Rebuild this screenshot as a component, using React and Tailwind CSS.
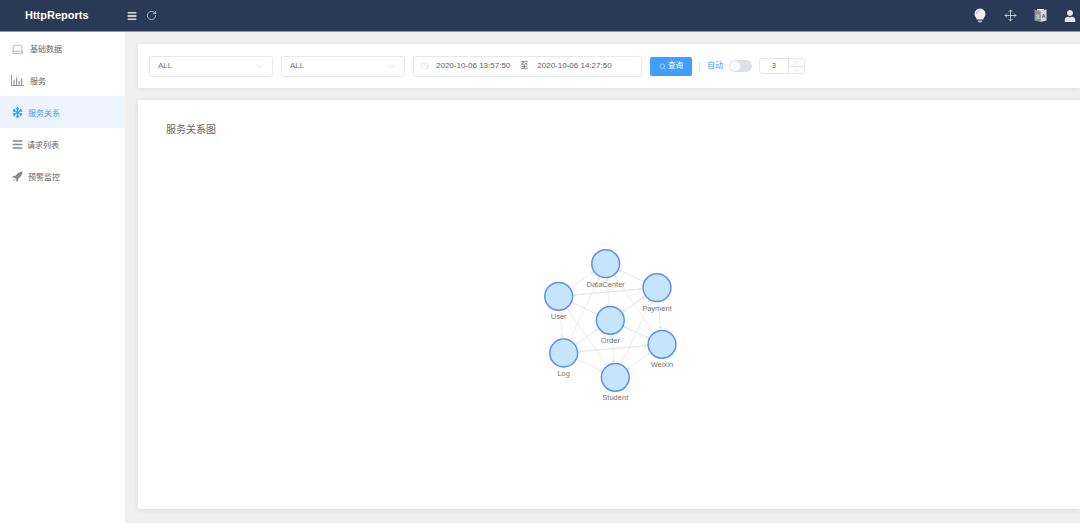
import { ChevronDown, ChevronUp, Clock, Search, RotateCw, Laptop, Move } from "lucide-react";
import { FaSnowflake, FaUser, FaBars } from "react-icons/fa";

const font = "font-['Liberation_Sans','Noto_Sans_CJK_SC',sans-serif]";

const nodes = {
  DataCenter: [605.7, 263.7],
  Payment: [657, 287.7],
  User: [558.7, 296.3],
  Order: [610.3, 320.3],
  Weixin: [662, 344.3],
  Log: [563.7, 353],
  Student: [615.3, 377.3],
};

const edges = [
  ["User", "DataCenter"],
  ["User", "Payment"],
  ["Payment", "User"],
  ["User", "Order"],
  ["Order", "User"],
  ["User", "Log"],
  ["User", "Student"],
  ["Payment", "DataCenter"],
  ["Order", "DataCenter"],
  ["Log", "DataCenter"],
  ["Weixin", "DataCenter"],
  ["Payment", "Order"],
  ["Order", "Payment"],
  ["Payment", "Weixin"],
  ["Payment", "Student"],
  ["Order", "Log"],
  ["Log", "Order"],
  ["Order", "Weixin"],
  ["Weixin", "Order"],
  ["Order", "Student"],
  ["Log", "Weixin"],
  ["Weixin", "Log"],
  ["Log", "Student"],
  ["Weixin", "Student"],
];

const ChartIcon = () => (
  <svg width="13" height="11" viewBox="0 0 13 11" fill="#999">
    <rect x="0" y="0" width="1" height="11" />
    <rect x="0" y="10" width="13" height="1" />
    <rect x="2.5" y="5" width="1.2" height="5" />
    <rect x="5" y="2.5" width="1.2" height="7.5" />
    <rect x="7.5" y="6" width="1.2" height="4" />
    <rect x="10" y="3.5" width="1.2" height="6.5" />
  </svg>
);

const RocketIcon = () => (
  <svg width="11" height="11" viewBox="0 0 12 12" fill="#888">
    <path d="M11.5 0.5C8 0.8 5.5 2.5 3.8 5.2L1 5.8 0.3 7.2 3 7.4 4.8 9.2 5 12 6.4 11.2 7 8.3C9.6 6.5 11.2 4 11.5 0.5z" />
    <path d="M2.6 8.6L3.6 9.6 1 11.2z" />
  </svg>
);

const BulbIcon = () => (
  <svg width="12" height="15" viewBox="0 0 12 15">
    <path d="M6 0.5a5.5 5.5 0 0 1 5.5 5.5c0 2.4-1.8 3.4-2.3 5.6H2.8C2.3 9.4 0.5 8.4 0.5 6A5.5 5.5 0 0 1 6 0.5z" fill="#ededed" />
    <path d="M3.8 12.4h4.4v1.2L7 14.6H5l-1.2-1z" fill="#b5b8bd" />
    <path d="M2.4 6a3.6 3.6 0 0 1 3-3.4" fill="none" stroke="#9aa0aa" strokeWidth="0.8" />
  </svg>
);

const TranslateIcon = () => (
  <svg width="13" height="15" viewBox="0 0 13 15" fontFamily="Liberation Sans, Noto Sans CJK SC, sans-serif">
    <path d="M0.5 1.5L6.5 3v11l-6-1.5z" fill="#8b93a1" />
    <path d="M6.5 3l6-1.5v11l-6 1.5z" fill="#d5d8dd" />
    <path d="M3 1h7v1.5L6.5 3 3 2.2z" fill="#eef0f2" />
    <text x="1.6" y="9.5" fontSize="4.5" fill="#f2f2f2">文</text>
    <text x="7.8" y="9.5" fontSize="5" fontWeight="700" fill="#3a4660">A</text>
  </svg>
);

const menu = [
  { label: "基础数据", icon: <Laptop size={14} strokeWidth={1.1} />, gap: "gap-[6px]" },
  { label: "服务", icon: <ChartIcon />, gap: "gap-[6px]" },
  { label: "服务关系", icon: <FaSnowflake size={11} />, gap: "gap-[4px]", active: true },
  { label: "请求列表", icon: <FaBars size={11} />, gap: "gap-[3px]" },
  { label: "预警监控", icon: <RocketIcon />, gap: "gap-[4px]" },
];

const Select = ({ width }) => (
  <div className={`${width} h-[21px] flex items-center justify-between pl-[8px] pr-[7px] bg-white border border-[#e6e8ee] rounded-[3px] text-[8px] text-[#777]`}>
    <span>ALL</span>
    <ChevronDown size={11} strokeWidth={1} className="text-[#c0c4cc]" />
  </div>
);

const Graph = () => (
  <svg width="160" height="170" viewBox="530 240 160 170" className="block">
    <defs>
      <marker id="arrow" markerWidth="5" markerHeight="5" refX="4" refY="2.5" orient="auto">
        <path d="M0 0 L5 2.5 L0 5 L1.5 2.5 Z" fill="#e6e6e6" />
      </marker>
    </defs>
    {edges.map(([a, b]) => {
      const [x1, y1] = nodes[a];
      const [x2, y2] = nodes[b];
      const d = Math.hypot(x2 - x1, y2 - y1);
      const r = 15;
      return (
        <line
          key={a + b}
          x1={x1}
          y1={y1}
          x2={x2 - ((x2 - x1) / d) * r}
          y2={y2 - ((y2 - y1) / d) * r}
          stroke="#e6e6e6"
          strokeWidth="0.8"
          markerEnd="url(#arrow)"
        />
      );
    })}
    {Object.entries(nodes).map(([name, [x, y]]) => (
      <g key={name}>
        <circle cx={x} cy={y} r="13.9" fill="#c6e5ff" stroke="#5b8ff9" strokeWidth="1.5" />
        <text x={x} y={y + 23} textAnchor="middle" fontSize="7.5" fill="#777">
          {name}
        </text>
      </g>
    ))}
  </svg>
);

export default function App() {
  return (
    <div className={`${font} w-[1080px] h-[530px] overflow-hidden bg-white`}>
      <header className="h-[32px] bg-[#2a3a56] border-b border-[#8a92a0] flex items-center text-white">
        <div className="w-[125px] pl-[25px] text-[11px] font-bold">HttpReports</div>
        <FaBars size={10} className="ml-[2px]" />
        <RotateCw size={11} strokeWidth={1.5} className="ml-[9px] text-[#dfe3e8]" />
        <div className="ml-auto flex items-center gap-[10px]">
          <span className="w-[20px] flex justify-center"><BulbIcon /></span>
          <span className="w-[20px] flex justify-center"><Move size={13} strokeWidth={1.4} className="text-[#dfeaf0]" /></span>
          <span className="w-[20px] flex justify-center"><TranslateIcon /></span>
          <span className="w-[20px] flex justify-center"><FaUser size={12} className="text-[#e6e6e6]" /></span>
        </div>
      </header>
      <div className="flex h-[491px]">
        <aside className="w-[125px] shrink-0 bg-white">
          {menu.map((item) => (
            <div
              key={item.label}
              className={`h-[32px] flex items-center pl-[11px] pt-px text-[8px] ${item.gap} ${item.active ? "bg-[#ecf5ff] text-[#409eff]" : "text-[#666]"}`}
            >
              <span className={`w-[13px] flex justify-center ${item.active ? "text-[#409eff]" : "text-[#888]"}`}>{item.icon}</span>
              <span className="pt-[3px]">{item.label}</span>
            </div>
          ))}
        </aside>
        <main className="flex-1 min-w-0 bg-[#f0f0f0] pl-[13px] pt-[12px] pb-[14px] flex flex-col gap-[12px]">
          <section className="h-[44px] shrink-0 bg-white rounded-l-[2px] shadow-[0_1px_4px_rgba(0,0,0,0.08)] flex items-center pl-[11px] text-[8px] text-[#606266]">
            <Select width="w-[124px]" />
            <div className="w-[8px]" />
            <Select width="w-[124px]" />
            <div className="w-[8px]" />
            <div className="w-[229px] h-[21px] flex items-center pl-[7px] border border-[#e6e8ee] rounded-[3px]">
              <Clock size={8} strokeWidth={1.2} className="text-[#c0c4cc]" />
              <span className="ml-[7px]">2020-10-06 13:57:50</span>
              <span className="ml-[10px] text-[#444]">至</span>
              <span className="ml-[9px]">2020-10-06 14:27:50</span>
            </div>
            <button className="ml-[8px] w-[42px] h-[19px] bg-[#409eff] rounded-[2px] text-white flex items-center justify-center gap-[2px] text-[7.5px]">
              <Search size={7} strokeWidth={1.6} />
              查询
            </button>
            <div className="ml-[7px] w-px h-[9px] bg-[#dcdfe6]" />
            <span className="ml-[7px] text-[#409eff]">自动</span>
            <div className="ml-[6px] w-[23px] h-[12px] rounded-full bg-[#dcdfe6] flex items-center pl-px">
              <div className="w-[10px] h-[10px] rounded-full bg-white" />
            </div>
            <div className="ml-[7px] w-[46px] h-[16px] flex border border-[#e6e8ee] rounded-[3px] text-[7px] text-[#555]">
              <div className="flex-1 flex items-center justify-center">3</div>
              <div className="w-[16px] border-l border-[#e6e8ee] flex flex-col text-[#999]">
                <div className="flex-1 flex items-center justify-center border-b border-[#e6e8ee]">
                  <ChevronUp size={7} strokeWidth={1.2} />
                </div>
                <div className="flex-1 flex items-center justify-center">
                  <ChevronDown size={7} strokeWidth={1.2} />
                </div>
              </div>
            </div>
          </section>
          <section className="flex-1 bg-white rounded-l-[2px] shadow-[0_1px_5px_rgba(0,0,0,0.1)] pl-[28px] pt-[23px]">
            <h2 className="text-[10px] leading-[14px] text-[#666]">服务关系图</h2>
            <div className="mt-[103px] ml-[364px]">
              <Graph />
            </div>
          </section>
        </main>
      </div>
    </div>
  );
}
